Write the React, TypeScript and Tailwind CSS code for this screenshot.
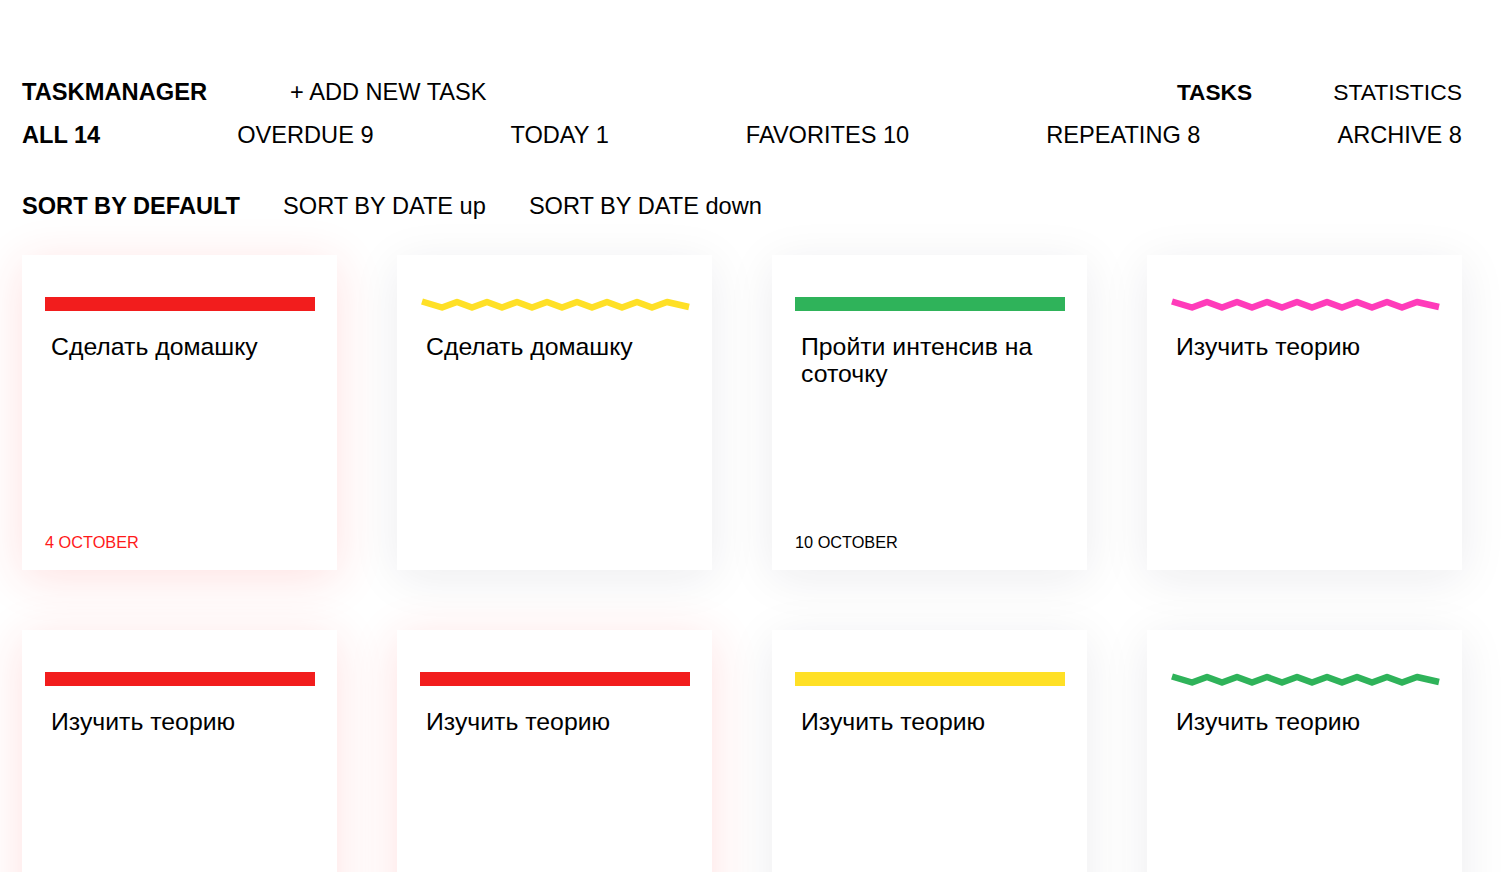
import React from "react";

type Card = {
  title: string;
  color: string;
  wave: boolean;
  date?: string;
  overdue?: boolean;
};

const cards: Card[] = [
  { title: "Сделать домашку", color: "#f21d1d", wave: false, date: "4 OCTOBER", overdue: true },
  { title: "Сделать домашку", color: "#ffe026", wave: true },
  { title: "Пройти интенсив на соточку", color: "#2fb35a", wave: false, date: "10 OCTOBER" },
  { title: "Изучить теорию", color: "#ff3bba", wave: true },
  { title: "Изучить теорию", color: "#f21d1d", wave: false, overdue: true },
  { title: "Изучить теорию", color: "#f21d1d", wave: false, overdue: true },
  { title: "Изучить теорию", color: "#ffe026", wave: false },
  { title: "Изучить теорию", color: "#2fb35a", wave: true },
];

function Wave({ color }: { color: string }) {
  const pts: string[] = ["2,4.5"];
  for (let k = 0; k < 8; k++) {
    pts.push(`${22 + 30 * k},10.5`);
    pts.push(`${37 + 30 * k},5`);
  }
  pts.push("269,10");
  return (
    <svg width="270" height="16" viewBox="0 0 270 16" className="block">
      <polyline
        points={pts.join(" ")}
        fill="none"
        stroke={color}
        strokeWidth="6.5"
        strokeLinejoin="round"
      />
    </svg>
  );
}

function TaskCard({ card }: { card: Card }) {
  return (
    <div
      className={
        "flex h-[315px] w-[315px] flex-col bg-white px-[23px] pb-[19px] pt-[42px] " +
        (card.overdue
          ? "shadow-[0_8px_45px_rgba(255,40,40,0.14)]"
          : "shadow-[0_8px_45px_rgba(20,25,45,0.08)]")
      }
    >
      {card.wave ? (
        <div className="h-[14px] w-[270px] overflow-visible">
          <Wave color={card.color} />
        </div>
      ) : (
        <div className="h-[14px] w-[270px]" style={{ backgroundColor: card.color }} />
      )}
      <p className="ml-[6px] mt-[22px] text-[24.8px] leading-[27px] text-black">{card.title}</p>
      {card.date && (
        <p
          className={
            "mt-auto text-[16.3px] leading-[18px] " + (card.overdue ? "text-[#ff1a1a]" : "text-black")
          }
        >
          {card.date}
        </p>
      )}
    </div>
  );
}

export default function App() {
  return (
    <div
      className="min-h-screen bg-white text-black"
      style={{ fontFamily: '"Liberation Sans", Arial, Helvetica, sans-serif' }}
    >
      <div className="ml-[22px] w-[1440px] pb-[60px] pt-[79px]">
        <header className="flex h-[26px] items-center leading-[26px]">
          <span className="text-[23.7px] font-bold">TASKMANAGER</span>
          <span className="ml-[83px] text-[23.6px]">+ ADD NEW TASK</span>
          <nav className="ml-auto flex gap-[81px]">
            <span className="text-[22.7px] font-bold">TASKS</span>
            <span className="text-[22.9px]">STATISTICS</span>
          </nav>
        </header>

        <div className="mt-[17px] flex h-[26px] items-center justify-between text-[23.6px] leading-[26px]">
          <span className="font-bold">ALL 14</span>
          <span>OVERDUE 9</span>
          <span>TODAY 1</span>
          <span>FAVORITES 10</span>
          <span>REPEATING 8</span>
          <span>ARCHIVE 8</span>
        </div>

        <div className="mt-[45px] flex h-[26px] items-center gap-[43px] text-[23.6px] leading-[26px]">
          <span className="font-bold">SORT BY DEFAULT</span>
          <span>SORT BY DATE up</span>
          <span>SORT BY DATE down</span>
        </div>

        <div className="mt-[36px] grid grid-cols-4 gap-x-[60px] gap-y-[60px]">
          {cards.map((c, i) => (
            <TaskCard key={i} card={c} />
          ))}
        </div>
      </div>
    </div>
  );
}
